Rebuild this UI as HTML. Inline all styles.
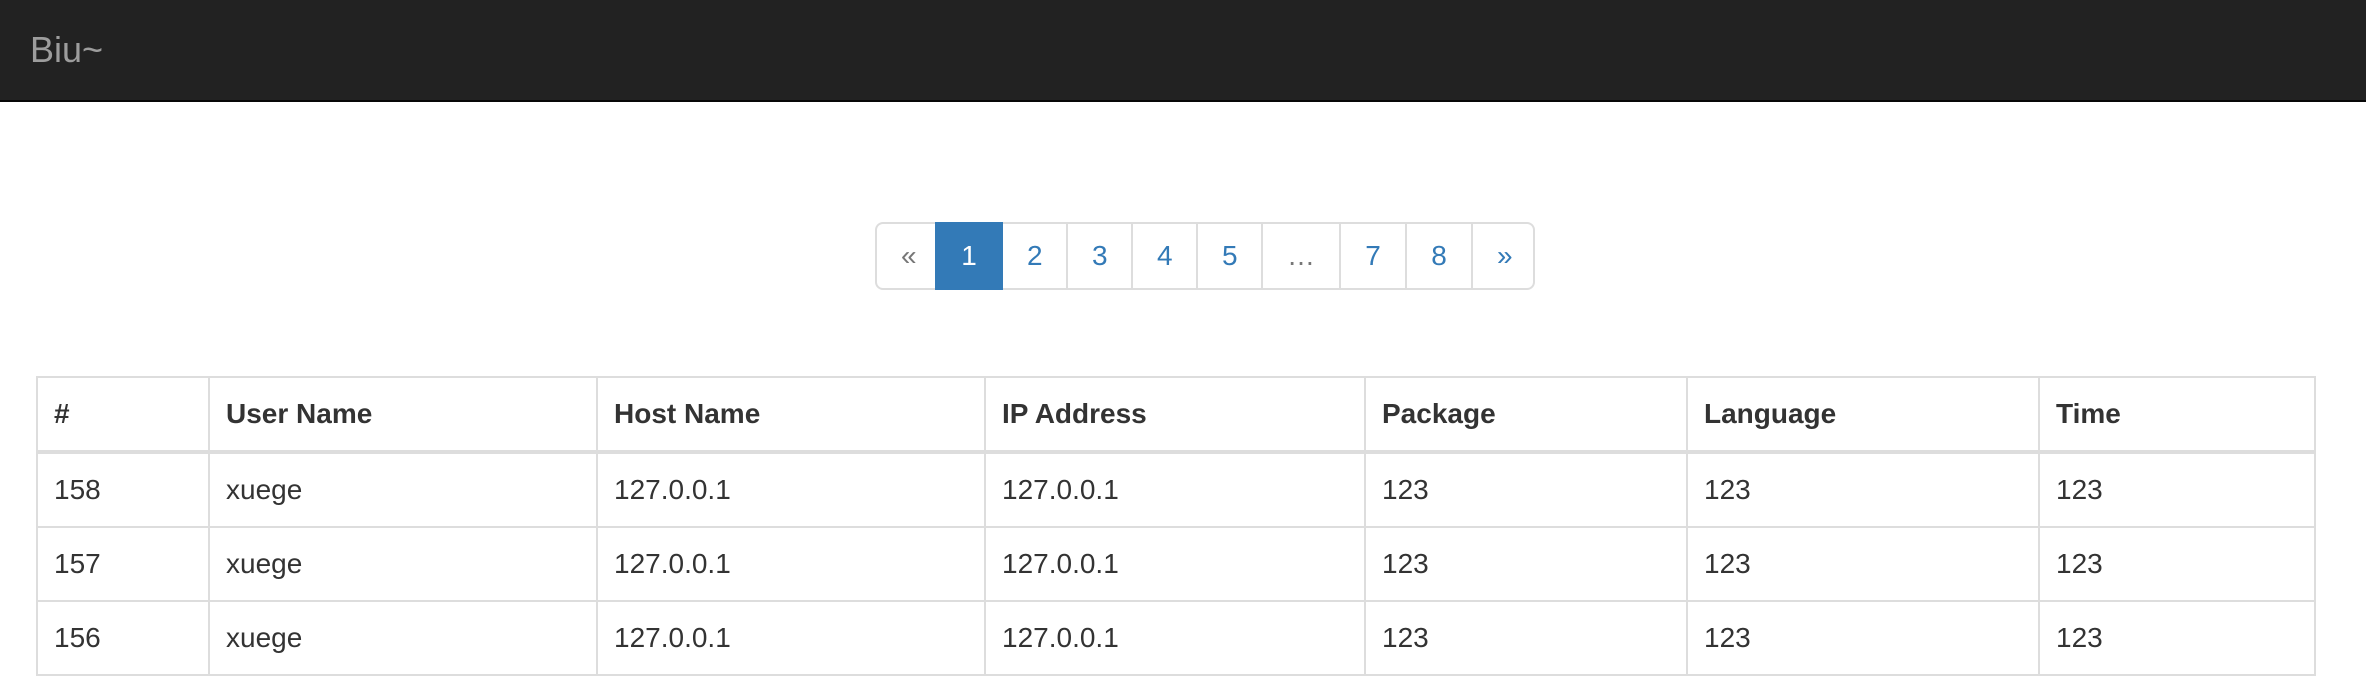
<!DOCTYPE html>
<html><head><meta charset="utf-8"><style>
html{zoom:2}
body{margin:0;width:1183px;height:339px;overflow:hidden;background:#fff;font-family:"Liberation Sans",Arial,sans-serif;font-size:14px;line-height:20px;color:#333}
.nav{height:50px;background:#222;border-bottom:1px solid #080808;position:relative}
.brand{position:absolute;left:15px;top:15px;font-size:18px;line-height:20px;color:#9d9d9d}
.pg{position:absolute;left:437.5px;top:111px;display:flex;height:34px}
.pg span{display:block;box-sizing:border-box;height:34px;padding:6px 12px;line-height:20px;border:1px solid #ddd;margin-left:-1px;color:#337ab7;text-align:center}
.pg span:first-child{margin-left:0;border-radius:4px 0 0 4px;color:#777}
.pg span:last-child{border-radius:0 4px 4px 0}
.pg span.a{background:#337ab7;border-color:#337ab7;color:#fff;position:relative;z-index:2}
.pg span.e{color:#777}
table{position:absolute;left:18px;top:188px;width:1140px;border-collapse:collapse;border:1px solid #ddd}
td,th{border:1px solid #ddd;padding:8px;text-align:left;vertical-align:top;line-height:20px}
th{border-bottom:2px solid #ddd;font-weight:bold}
</style></head><body>
<div class="nav"><div class="brand">Biu~</div></div>
<div class="pg"><span style="width:31px">«</span><span class="a" style="width:34px">1</span><span style="width:33.5px">2</span><span style="width:33.5px">3</span><span style="width:33.5px">4</span><span style="width:33.5px">5</span><span class="e" style="width:40px">…</span><span style="width:34px">7</span><span style="width:34px">8</span><span style="width:32px">»</span></div>
<table>
<colgroup><col style="width:86px"><col style="width:194px"><col style="width:194px"><col style="width:190px"><col style="width:161px"><col style="width:176px"><col></colgroup>
<tr><th>#</th><th>User Name</th><th>Host Name</th><th>IP Address</th><th>Package</th><th>Language</th><th>Time</th></tr>
<tr><td>158</td><td>xuege</td><td>127.0.0.1</td><td>127.0.0.1</td><td>123</td><td>123</td><td>123</td></tr>
<tr><td>157</td><td>xuege</td><td>127.0.0.1</td><td>127.0.0.1</td><td>123</td><td>123</td><td>123</td></tr>
<tr><td>156</td><td>xuege</td><td>127.0.0.1</td><td>127.0.0.1</td><td>123</td><td>123</td><td>123</td></tr>
</table>
</body></html>
